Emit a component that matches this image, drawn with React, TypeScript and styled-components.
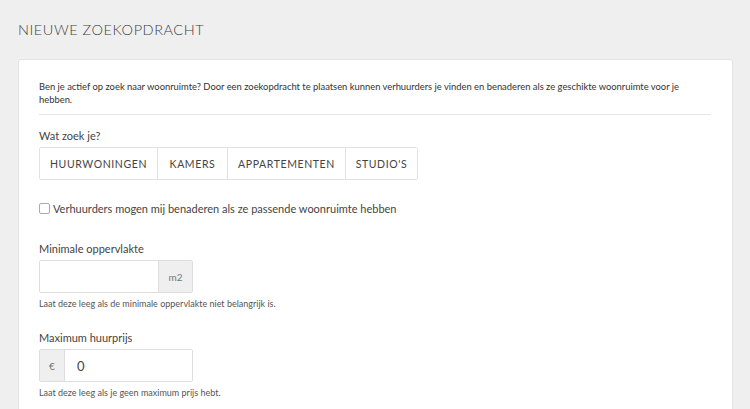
import React, { useState } from "react";
import styled, { createGlobalStyle } from "styled-components";

const GlobalStyle = createGlobalStyle`
  html, body {
    margin: 0;
    padding: 0;
    background: #efefef;
  }
  body {
    font-family: Lato, "Open Sans", sans-serif;
    color: #333;
  }
`;

const Page = styled.div`
  padding: 21px 17px 0 18px;
  height: 409px;
  box-sizing: border-box;
  overflow: hidden;
`;

const PageTitle = styled.h1`
  margin: 0 0 20px;
  font-size: 14.5px;
  font-weight: 300;
  letter-spacing: 0.55px;
  color: #3f3f3f;
  line-height: 18px;
`;

const Card = styled.section`
  background: #fff;
  border: 1px solid #e4e4e4;
  border-radius: 3px;
  padding: 20px 21px 40px 20px;
  min-height: 400px;
`;

const Intro = styled.p`
  margin: 0;
  font-size: 9.4px;
  line-height: 13px;
  color: #333;
  padding: 0 12px 8px 0;
  border-bottom: 1px solid #e6e6e6;
`;

const Label = styled.div<{ $top: number }>`
  font-size: 11px;
  color: #444;
  line-height: 14px;
  margin: ${(p) => p.$top}px 0 4px;
`;

const ButtonGroup = styled.div`
  display: inline-flex;
  border: 1px solid #e2e2e2;
  border-radius: 2px;
`;

const TypeButton = styled.button<{ $w: number }>`
  width: ${(p) => p.$w}px;
  height: 31px;
  border: none;
  border-left: 1px solid #e2e2e2;
  background: #fff;
  font-family: Lato, sans-serif;
  font-size: 10.5px;
  letter-spacing: 0.6px;
  color: #444;
  padding: 0;
  cursor: pointer;
  &:first-child {
    border-left: none;
  }
`;

const CheckRow = styled.label`
  display: flex;
  align-items: center;
  gap: 3px;
  margin-top: 22px;
  font-size: 11px;
  color: #444;
`;

const Box = styled.span`
  display: inline-block;
  width: 9px;
  height: 9px;
  border: 1px solid #aaa;
  border-radius: 2px;
  background: #fff;
`;

const InputGroup = styled.div`
  display: inline-flex;
  height: 31px;
  border: 1px solid #dedede;
  border-radius: 2px;
`;

const Field = styled.input<{ $w: number }>`
  width: ${(p) => p.$w}px;
  border: none;
  outline: none;
  padding: 0 12px;
  box-sizing: border-box;
  font-family: Lato, sans-serif;
  font-size: 13px;
  color: #444;
  background: #fff;
`;

const Addon = styled.span<{ $w: number; $side: "left" | "right" }>`
  width: ${(p) => p.$w}px;
  display: flex;
  align-items: center;
  justify-content: center;
  background: #efefef;
  color: #777;
  font-size: 10px;
  ${(p) =>
    p.$side === "left"
      ? "border-right: 1px solid #dedede;"
      : "border-left: 1px solid #dedede;"}
`;

const Help = styled.div`
  font-size: 9px;
  color: #555;
  margin-top: 5px;
`;

const types = [
  { label: "HUURWONINGEN", w: 117 },
  { label: "KAMERS", w: 70 },
  { label: "APPARTEMENTEN", w: 118 },
  { label: "STUDIO'S", w: 72 },
];

export default function App() {
  const [price, setPrice] = useState("0");
  const [area, setArea] = useState("");
  return (
    <>
      <GlobalStyle />
      <Page>
        <PageTitle>NIEUWE ZOEKOPDRACHT</PageTitle>
        <Card>
          <Intro>
            Ben je actief op zoek naar woonruimte? Door een zoekopdracht te
            plaatsen kunnen verhuurders je vinden en benaderen als ze geschikte
            woonruimte voor je hebben.
          </Intro>
          <Label $top={14}>Wat zoek je?</Label>
          <ButtonGroup>
            {types.map((t) => (
              <TypeButton key={t.label} $w={t.w}>
                {t.label}
              </TypeButton>
            ))}
          </ButtonGroup>
          <CheckRow>
            <Box />
            Verhuurders mogen mij benaderen als ze passende woonruimte hebben
          </CheckRow>
          <Label $top={27}>Minimale oppervlakte</Label>
          <InputGroup>
            <Field $w={118} value={area} onChange={(e) => setArea(e.target.value)} />
            <Addon $w={33} $side="right">m2</Addon>
          </InputGroup>
          <Help>Laat deze leeg als de minimale oppervlakte niet belangrijk is.</Help>
          <Label $top={22}>Maximum huurprijs</Label>
          <InputGroup>
            <Addon $w={24} $side="left">€</Addon>
            <Field $w={127} value={price} onChange={(e) => setPrice(e.target.value)} />
          </InputGroup>
          <Help>Laat deze leeg als je geen maximum prijs hebt.</Help>
        </Card>
      </Page>
    </>
  );
}
